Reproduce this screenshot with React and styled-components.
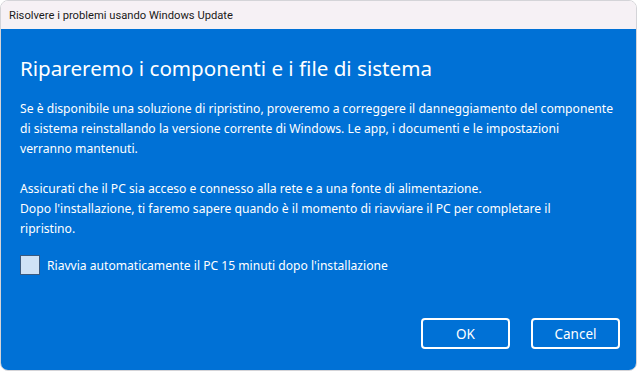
import React from "react";
import styled, { createGlobalStyle } from "styled-components";

const Global = createGlobalStyle`
  html, body { margin: 0; padding: 0; background: #ffffff; }
  #root { width: 637px; height: 372px; }
  * { box-sizing: border-box; }
`;

const Window = styled.div`
  width: 637px;
  height: 371px;
  border: 1px solid #d4d4d8;
  border-radius: 8px;
  overflow: hidden;
  display: flex;
  flex-direction: column;
  font-family: "Segoe UI", "Noto Sans", "Open Sans", sans-serif;
`;

const TitleBar = styled.div`
  height: 28px;
  flex: none;
  background: #f6f1f5;
  display: flex;
  align-items: center;
  padding-left: 8px;
  font-family: Roboto, "Noto Sans", sans-serif;
  font-size: 11.2px;
  color: #1a1a1a;
`;

const Body = styled.div`
  flex: 1;
  background: #0071d6;
  color: #ffffff;
  display: flex;
  flex-direction: column;
  padding: 25px 16px 21px 19px;
`;

const Heading = styled.h1`
  margin: 0;
  font-size: 20.6px;
  font-weight: 400;
  line-height: 28px;
`;

const Paragraph = styled.p`
  margin: ${(p) => p.$top}px 0 0 0;
  font-size: 12.15px;
  line-height: 20px;
  white-space: nowrap;
`;

const CheckRow = styled.label`
  margin-top: 16px;
  display: flex;
  align-items: center;
  gap: 7px;
  font-size: 12.1px;
`;

const Box = styled.span`
  width: 20px;
  height: 20px;
  border: 1px solid #3a5a80;
  background: #cfe2f6;
  flex: none;
`;

const Footer = styled.div`
  margin-top: auto;
  display: flex;
  justify-content: flex-end;
  gap: 21px;
`;

const Button = styled.button`
  width: 89px;
  height: 31px;
  border: 2px solid #ffffff;
  border-radius: 4px;
  background: transparent;
  color: #ffffff;
  font-family: inherit;
  font-size: 13.5px;
  padding: 0;
`;

export default function App() {
  return (
    <>
      <Global />
      <Window>
        <TitleBar>Risolvere i problemi usando Windows Update</TitleBar>
        <Body>
          <Heading>Ripareremo i componenti e i file di sistema</Heading>
          <Paragraph $top={17}>
            Se è disponibile una soluzione di ripristino, proveremo a correggere il danneggiamento del componente
            <br />
            di sistema reinstallando la versione corrente di Windows. Le app, i documenti e le impostazioni
            <br />
            verranno mantenuti.
          </Paragraph>
          <Paragraph $top={20}>
            Assicurati che il PC sia acceso e connesso alla rete e a una fonte di alimentazione.
            <br />
            Dopo l'installazione, ti faremo sapere quando è il momento di riavviare il PC per completare il
            <br />
            ripristino.
          </Paragraph>
          <CheckRow>
            <Box />
            Riavvia automaticamente il PC 15 minuti dopo l'installazione
          </CheckRow>
          <Footer>
            <Button>OK</Button>
            <Button>Cancel</Button>
          </Footer>
        </Body>
      </Window>
    </>
  );
}
